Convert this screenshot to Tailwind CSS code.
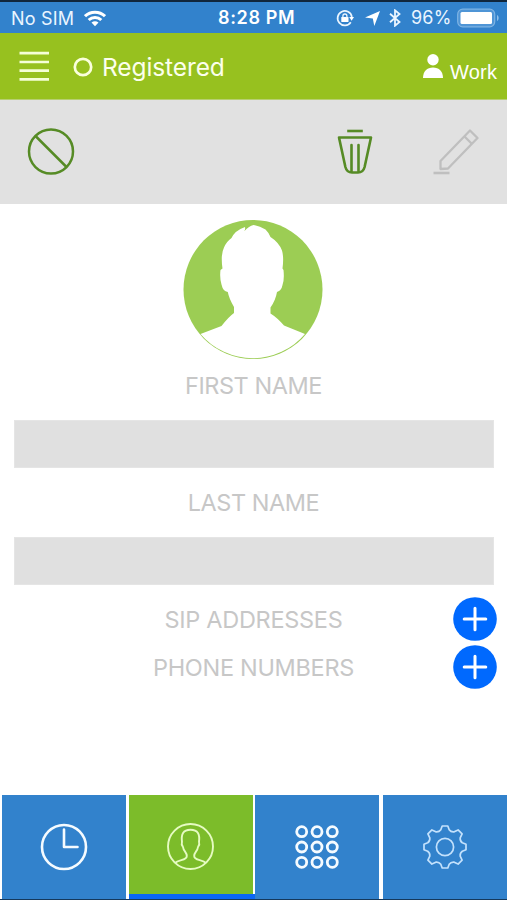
<!DOCTYPE html>
<html lang="en">
<head>
<meta charset="utf-8">
<title>Contact</title>
<script src="https://cdn.jsdelivr.net/npm/@tailwindcss/browser@4"></script>
</head>
<body class="bg-white">
<div class="w-[507px] h-[900px] flex flex-col overflow-hidden bg-white font-['Inter','Liberation_Sans',sans-serif] border-t-2 border-b border-t-[#10263c] border-b-[#15395c]">
  <!-- Status bar -->
  <div class="h-[31px] shrink-0 bg-[#3282cc] text-[#eaf5ff] flex items-center text-[18px] leading-none">
    <div class="flex items-center pl-[11px] w-[218px] pt-[1px]">
      <span class="w-[73px] whitespace-nowrap tracking-[0.2px] pt-[1px]">No SIM</span>
      <svg class="w-[22px] h-[17px]" viewBox="0 0 22 17" fill="none" stroke="#fff" stroke-width="3"><path d="M1 6.2C6.5.8 15.5.8 21 6.2M4.700 10C8.300 6.500 13.700 6.500 17.300 10"/><path d="M11 16.200 7.500 12.600Q11 9.700 14.500 12.600Z" fill="#fff" stroke="none"/></svg>
    </div>
    <div class="w-[118px] pt-[1px] font-semibold text-white whitespace-nowrap text-[18px] tracking-[0.65px]">8:28 PM</div>
    <!-- Rotation lock -->
    <svg class="w-[18px] h-[18px] shrink-0 mt-[1px]" viewBox="0 0 18 18" fill="none" stroke="#eaf5ff" stroke-width="1.700">
      <path d="M14.800 13.200A7.200 7.200 0 1 1 15.900 8"/><path d="M13.200 8h4.800l-2.400 3.800Z" fill="#fff" stroke="none"/>
      <rect x="5.300" y="8" width="7.200" height="5" rx=".6" fill="#fff" stroke="none"/><path d="M6.900 8.500V7a2 2 0 0 1 4 0v1.500" stroke-width="1.300"/>
    </svg>
    <svg class="w-[15px] h-[15px] ml-[11px] mt-[1px] shrink-0" viewBox="0 0 15 15" fill="#fff"><path d="M15 0 9.300 15 7.800 7.600 0 6.600Z"/></svg>
    <svg class="w-[12px] h-[18px] ml-[9px] mt-[1px] shrink-0" viewBox="0 0 12 18" fill="none" stroke="#eaf5ff" stroke-width="1.800"><path d="M1 4.800 10.500 13 6 16.700V1.300L10.500 5 1 13.200"/></svg>
    <span class="ml-[10px] pt-[1px] w-[46px] whitespace-nowrap text-[18px] tracking-[0.2px]">96%</span>
    <svg class="w-[43px] h-[20px] shrink-0 mt-[1px]" viewBox="0 0 43 20"><rect x=".7" y="1.200" width="37" height="17.600" rx="5" fill="#4f95d6" stroke="#7fb4e4" stroke-width="1.200"/><rect x="3.500" y="4" width="31.500" height="12" rx="1.500" fill="#fff"/><path d="M40 7c2.200 1 2.200 5 0 6Z" fill="#8fbfe9"/></svg>
  </div>

  <!-- Account header -->
  <header class="h-[67px] shrink-0 bg-[#97c11f] text-white flex items-center border-b border-[#b7cf72]">
    <svg class="w-[30px] h-[32px] ml-[19px]" viewBox="0 0 30 32" stroke="#f5ffd8" stroke-width="2.700"><path d="M.5 3.200H30M.5 12H30M.5 20.600H30M.5 29.400H30"/></svg>
    <svg class="ml-[24px] w-[20px] h-[20px] mt-[1px]" viewBox="0 0 20 20" fill="none" stroke="#faffdc" stroke-width="2.700"><circle cx="10" cy="10" r="8.200"/></svg>
    <div class="ml-[9px] text-[24.500px] leading-none text-[#fcffec] whitespace-nowrap tracking-[-0.1px] w-[310px] pt-[2px]">Registered</div>
    <svg class="w-[20px] h-[24px] ml-[11px] shrink-0" viewBox="0 0 20 24" fill="#fff"><circle cx="10" cy="5.800" r="5.700"/><path d="M0 24C0 17.500 4 13.500 10 13.500S20 17.500 20 24Z"/></svg>
    <div class="ml-[7px] pt-[11px] font-['Liberation_Sans',sans-serif] text-[20px] tracking-[0.2px] leading-none">Work</div>
  </header>

  <!-- Contact actions -->
  <div class="h-[104px] shrink-0 bg-[#e1e1e1] flex items-center">
    <svg class="w-[48px] h-[48px] ml-[27px]" viewBox="0 0 48 48" fill="none" stroke="#568b25" stroke-width="2.500"><circle cx="24" cy="23.500" r="22"/><path d="M8.500 8l31 31"/></svg>
    <svg class="w-[36px] h-[46px] ml-[262px]" viewBox="0 0.5 36 46" fill="none" stroke="#568b25" stroke-width="2.600" stroke-linecap="round" stroke-linejoin="round"><path d="M11.500 2.500h13" stroke-linecap="square"/><path d="M2 9H34L27.600 38.500Q26.200 44 21 44H15Q9.800 44 8.400 38.500Z"/><path d="M14.500 16.500V43M21.500 16.500V43"/></svg>
    <svg class="w-[46px] h-[48px] ml-[60px]" viewBox="0 1 46 48" fill="none" stroke="#bfbfbf" stroke-width="2.300" stroke-linejoin="round"><path d="M37 3.500 44.500 11 15 41.500 7.500 42V34Z"/><path d="M31.500 9.500 39 17"/><path d="M.5 46H16.500" stroke-width="2.600"/></svg>
  </div>

  <!-- Contact form -->
  <main class="flex-1 flex flex-col px-[13.500px] text-[#c7c7c7] text-[23.500px] leading-none">
    <svg class="w-[140px] h-[140px] mt-[15px] ml-[169px] shrink-0" viewBox="0 -0.5 140 140">
      <circle cx="70" cy="70" r="69.500" fill="#9ccd54"/>
      <path d="M17.500 114.500 38.500 106.500Q46 97 51 93.500V87.500Q46 79 44.800 72.500Q40 72 38.500 65Q36.500 58 37.500 50.500L39.500 49Q37.500 35 41 28Q43.500 22 48.500 18.500Q52 11 62 7.500Q62.500 9.500 61.500 11.500Q66 6.500 70.500 5.500Q77 6.500 82.500 10Q86.500 14 87.500 17.500Q96 23 99 31Q101 38 99.500 49L100.500 50.500Q101.500 60 99.500 65.500Q98.500 71 94 72.500Q92.500 81 87.500 88V94Q94 98 101 106L122 114.500A68.500 68.500 0 0 1 17.500 114.500Z" fill="#fff"/>
    </svg>
    <label class="h-[61px] pt-[15px] text-center shrink-0 tracking-[-0.45px]">FIRST NAME</label>
    <div class="h-[48px] shrink-0 bg-[#e0e0e0] border border-[#e5e5e5]"></div>
    <label class="h-[69px] pt-[23px] text-center shrink-0 tracking-[-0.45px]">LAST NAME</label>
    <div class="h-[48px] shrink-0 bg-[#e0e0e0] border border-[#e5e5e5]"></div>
    <div class="mt-[12px] grid gap-y-[3px] shrink-0">
      <div class="h-[44.500px] flex items-center justify-between mr-[-3px]">
        <span class="w-[480px] text-center tracking-[-0.3px] pt-[1px]">SIP ADDRESSES</span>
        <svg class="w-[44px] h-[44px] ml-[-44px] shrink-0" viewBox="0 0 44 44"><circle cx="22" cy="22" r="21.800" fill="#0069fe"/><path d="M22 11.200V32.800M11.200 22H32.800" stroke="#fff" stroke-width="3" stroke-linecap="round"/></svg>
      </div>
      <div class="h-[44.500px] flex items-center justify-between mr-[-3px]">
        <span class="w-[480px] text-center tracking-[-0.3px] pt-[1px]">PHONE NUMBERS</span>
        <svg class="w-[44px] h-[44px] ml-[-44px] shrink-0" viewBox="0 0 44 44"><circle cx="22" cy="22" r="21.800" fill="#0069fe"/><path d="M22 11.200V32.800M11.200 22H32.800" stroke="#fff" stroke-width="3" stroke-linecap="round"/></svg>
      </div>
    </div>
  </main>

  <!-- Tab bar -->
  <nav class="h-[104px] shrink-0 flex pl-[2px] bg-white">
    <div class="w-[124px] mr-[2.500px] bg-[#3282cc] flex justify-center items-center pb-[1px]">
      <svg class="w-[48px] h-[48px]" viewBox="0 0 48 48" fill="none" stroke="#f5fbff" stroke-width="2.600"><circle cx="24" cy="24" r="22"/><path d="M24 6.500V24H37.500" stroke-linecap="round" stroke-linejoin="round"/></svg>
    </div>
    <div class="w-[126px] flex flex-col">
      <div class="flex-1 bg-[#7cbc2a] flex justify-center items-center mr-[1.500px] pt-[4px]">
        <svg class="w-[48px] h-[48px]" viewBox="0.5 0.5 48 48" fill="none" stroke="#e6fbc2" stroke-width="1.900"><circle cx="24" cy="24" r="22.500"/><path d="M8.500 40.500C12 36.500 20.300 38.500 20.300 33.500C20.300 29.500 17 29 16.500 24.500Q14.500 22 15.500 19.500C14.500 12 16.500 7.300 24 7.300S33.500 12 32.500 19.500Q33.500 22 31.500 24.500C31 29 27.700 29.500 27.700 33.500C27.700 38.500 36 36.500 39.500 40.500" stroke-linejoin="round"/></svg>
      </div>
      <div class="h-[5px] bg-[#0a67f5]"></div>
    </div>
    <div class="w-[124.500px] bg-[#3282cc] flex justify-center items-center mr-[4px] pb-[1px]">
      <svg class="w-[44px] h-[44px]" viewBox="0 0 44 44" fill="none" stroke="#f5fbff" stroke-width="2.800"><circle cx="6.700" cy="6.700" r="5"/><circle cx="22" cy="6.700" r="5"/><circle cx="37.300" cy="6.700" r="5"/><circle cx="6.700" cy="22" r="5"/><circle cx="22" cy="22" r="5"/><circle cx="37.300" cy="22" r="5"/><circle cx="6.700" cy="37.300" r="5"/><circle cx="22" cy="37.300" r="5"/><circle cx="37.300" cy="37.300" r="5"/></svg>
    </div>
    <div class="flex-1 bg-[#3282cc] flex justify-center items-center pb-[1px]">
      <svg class="w-[46px] h-[46px]" viewBox="-23 -23 46 46" fill="none" stroke="#c3e1fc" stroke-width="1.700" stroke-linejoin="round"><circle r="8.600"/><path d="M-2.800-21H2.800L4.200-17.300Q6-14.800 9.200-15.200L13.100-17.100 17.100-13.100 15.200-9.200Q14.800-6 17.300-4.200L21-2.800V2.800L17.300 4.200Q14.800 6 15.200 9.200L17.100 13.100 13.100 17.100 9.200 15.200Q6 14.800 4.200 17.300L2.800 21H-2.800L-4.200 17.300Q-6 14.800-9.200 15.200L-13.100 17.100-17.100 13.100-15.200 9.200Q-14.800 6-17.300 4.200L-21 2.800V-2.800L-17.300-4.200Q-14.800-6-15.200-9.200L-17.100-13.100-13.100-17.100-9.200-15.200Q-6-14.800-4.200-17.300Z"/></svg>
    </div>
  </nav>
</div>
</body>
</html>
